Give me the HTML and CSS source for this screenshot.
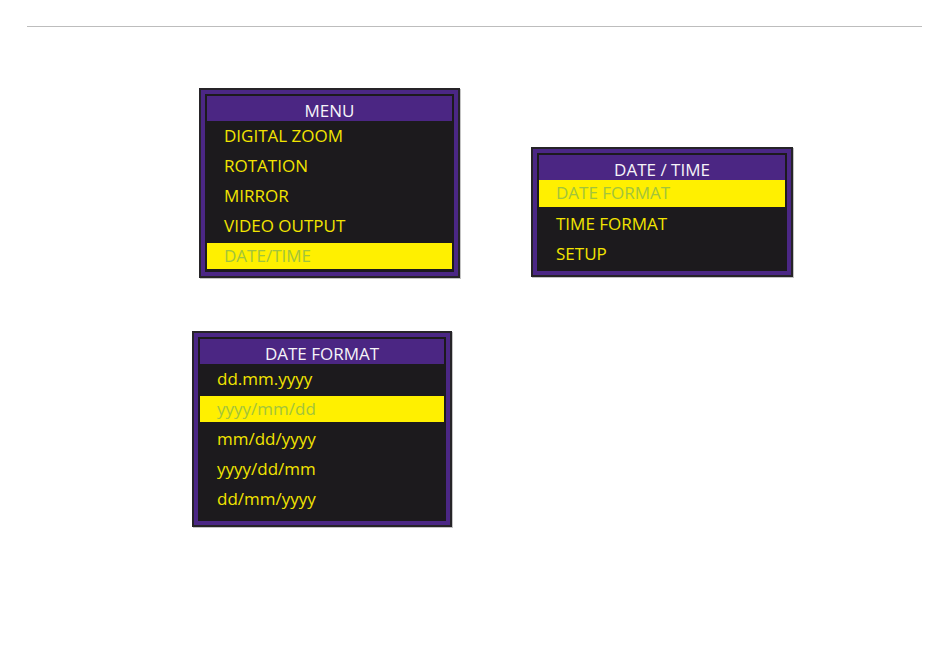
FILE: index.html
```
<!DOCTYPE html>
<html>
<head>
<meta charset="utf-8">
<link rel="stylesheet" href="styles.css">
</head>
<body>
<div class="rule"></div>
<div class="row-top">
  <div class="frame frame-menu">
    <div class="frame-inner">
      <div class="title">MENU</div>
      <div class="item">DIGITAL ZOOM</div>
      <div class="item">ROTATION</div>
      <div class="item">MIRROR</div>
      <div class="item">VIDEO OUTPUT</div>
      <div class="item active">DATE/TIME</div>
    </div>
  </div>
  <div class="frame frame-datetime">
    <div class="frame-inner">
      <div class="title">DATE / TIME</div>
      <div class="item active">DATE FORMAT</div>
      <div class="item">TIME FORMAT</div>
      <div class="item">SETUP</div>
    </div>
  </div>
</div>
<div class="row-bottom">
  <div class="frame frame-format">
    <div class="frame-inner">
      <div class="title">DATE FORMAT</div>
      <div class="item">dd.mm.yyyy</div>
      <div class="item active">yyyy/mm/dd</div>
      <div class="item">mm/dd/yyyy</div>
      <div class="item">yyyy/dd/mm</div>
      <div class="item">dd/mm/yyyy</div>
    </div>
  </div>
</div>
</body>
</html>
```
FILE: styles.css
```
html, body {
  margin: 0;
  padding: 0;
  background: #ffffff;
}
body {
  width: 950px;
  height: 657px;
  font-family: "Open Sans", "Noto Sans", sans-serif;
  overflow: hidden;
}
.rule {
  margin: 26px 28px 0 27px;
  height: 1px;
  background: #bdbdbd;
}
.row-top {
  display: flex;
  align-items: flex-start;
  padding-left: 199px;
  margin-top: 61px;
}
.row-bottom {
  display: flex;
  padding-left: 192px;
  margin-top: 53px;
}
.frame {
  width: 261px;
  box-sizing: border-box;
  border: 2px solid #262428;
  background: #1c1a1d;
  box-shadow: 1px 1px 0 #c4c4c4;
}
.frame-datetime {
  margin-left: 71px;
  margin-top: 59px;
  width: 262px;
}
.frame-format {
  width: 260px;
}
.frame-inner {
  display: flex;
  flex-direction: column;
  border: 4px solid #4b2785;
  padding: 2px 2px 1px 2px;
  background: #1c1a1d;
}
.frame-datetime .frame-inner {
  padding-bottom: 2px;
}
.frame-format .frame-inner {
  padding-bottom: 7px;
}
.title {
  box-sizing: border-box;
  height: 25px;
  padding-top: 5px;
  line-height: 20px;
  background: #4b2683;
  color: #f6f4f8;
  text-align: center;
  font-size: 17px;
}
.item {
  height: 26px;
  line-height: 26px;
  margin: 2px 0;
  padding-left: 17px;
  color: #f2e400;
  font-size: 17px;
}
.frame-datetime .item.active {
  margin-top: 0;
  height: 27px;
}
.item.active {
  background: #fff000;
  color: #a2c43c;
}
```
